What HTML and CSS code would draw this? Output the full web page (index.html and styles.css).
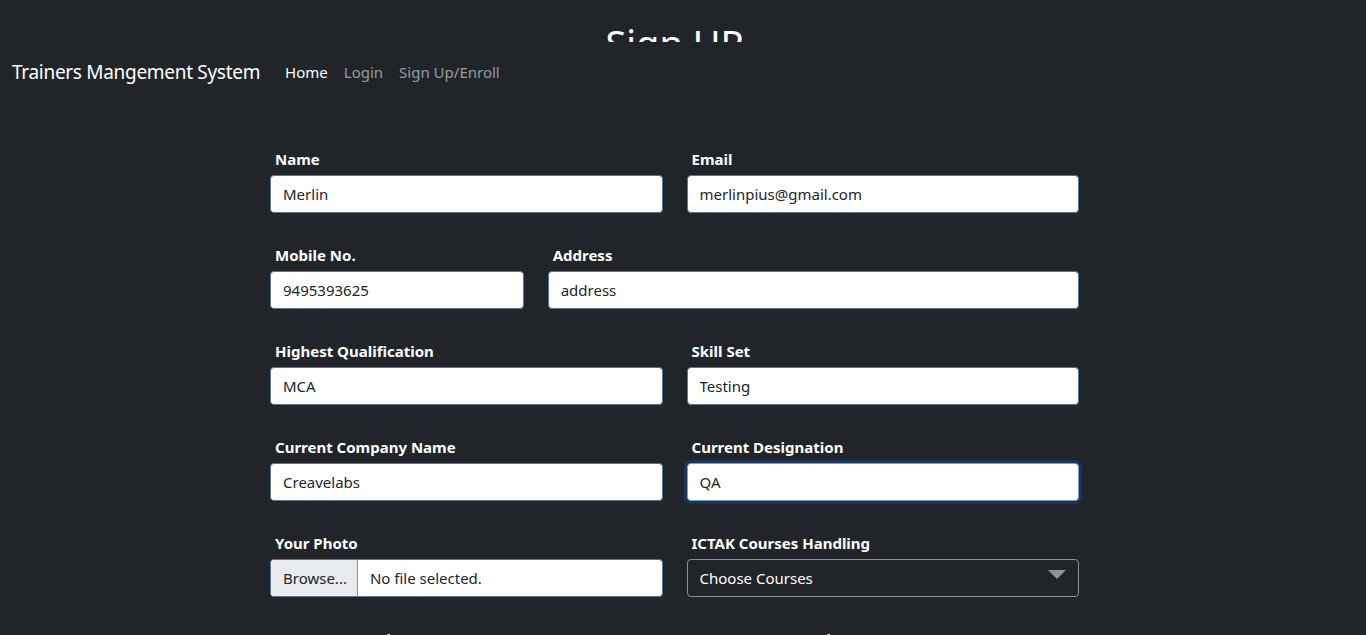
FILE: index.html
```html
<!DOCTYPE html>
<html lang="en">
<head>
<meta charset="utf-8">
<title>Sign UP</title>
<link rel="stylesheet" href="styles.css">
</head>
<body>
<div class="page">
  <h1 class="title">Sign UP</h1>
  <nav class="navbar">
    <a class="brand" href="#">Trainers Mangement System</a>
    <ul class="nav-links">
      <li><a class="nav-link active" href="#">Home</a></li>
      <li><a class="nav-link" href="#">Login</a></li>
      <li><a class="nav-link" href="#">Sign Up/Enroll</a></li>
    </ul>
  </nav>
  <form class="signup-form">
    <div class="field col-6">
      <label class="field-label">Name</label>
      <input class="control" type="text" value="Merlin">
    </div>
    <div class="field col-6">
      <label class="field-label">Email</label>
      <input class="control" type="text" value="merlinpius@gmail.com">
    </div>
    <div class="field col-4">
      <label class="field-label">Mobile No.</label>
      <input class="control" type="text" value="9495393625">
    </div>
    <div class="field col-8">
      <label class="field-label">Address</label>
      <input class="control" type="text" value="address">
    </div>
    <div class="field col-6">
      <label class="field-label">Highest Qualification</label>
      <input class="control" type="text" value="MCA">
    </div>
    <div class="field col-6">
      <label class="field-label">Skill Set</label>
      <input class="control" type="text" value="Testing">
    </div>
    <div class="field col-6">
      <label class="field-label">Current Company Name</label>
      <input class="control" type="text" value="Creavelabs">
    </div>
    <div class="field col-6">
      <label class="field-label">Current Designation</label>
      <input class="control is-focused" type="text" value="QA">
    </div>
    <div class="field col-6">
      <label class="field-label">Your Photo</label>
      <div class="file-control">
        <span class="file-button">Browse...</span>
        <span class="file-name">No file selected.</span>
      </div>
    </div>
    <div class="field col-6">
      <label class="field-label">ICTAK Courses Handling</label>
      <div class="select-control">
        <span>Choose Courses</span>
        <svg class="caret" width="18" height="10" viewBox="0 0 18 10"><path d="M0 0 L18 0 L9 9 Z" fill="#8f9296"/></svg>
      </div>
    </div>
    <div class="field col-6">
      <label class="field-label">Enter Password</label>
      <input class="control" type="password" value="">
    </div>
    <div class="field col-6">
      <label class="field-label">Re-Enter Password</label>
      <input class="control" type="password" value="">
    </div>
  </form>
</div>
</body>
</html>
```
FILE: styles.css
```css
* { box-sizing: border-box; }
html, body {
  margin: 0;
  padding: 0;
  background: #212529;
  height: 100%;
  overflow: hidden;
}
body {
  font-family: "Noto Sans", "Open Sans", sans-serif;
  color: #fff;
}
.page {
  position: relative;
  width: 1349px;
}
.title {
  margin: 0;
  padding-top: 20px;
  height: 42px;
  overflow: hidden;
  text-align: center;
  font-weight: 400;
  font-size: 38px;
  line-height: 46px;
  color: #fff;
}
.navbar {
  display: flex;
  align-items: center;
  height: 62px;
  padding: 0 12px 2px;
  background: #212529;
}
.brand {
  color: #fff;
  text-decoration: none;
  font-size: 19px;
  margin-right: 17px;
  letter-spacing: -0.3px;
}
.nav-links {
  display: flex;
  list-style: none;
  margin: 0;
  padding: 0;
}
.nav-link {
  display: block;
  padding: 0 8px;
  font-size: 15px;
  color: rgba(255,255,255,0.55);
  text-decoration: none;
}
.nav-link.active { color: #fff; }
.signup-form {
  display: grid;
  grid-template-columns: repeat(12, 1fr);
  column-gap: 24px;
  row-gap: 30px;
  width: 809px;
  margin: 43px 0 0 270px;
}
.col-4 { grid-column: span 4; }
.col-6 { grid-column: span 6; }
.col-8 { grid-column: span 8; }
.field { display: flex; flex-direction: column; }
.field-label {
  display: block;
  padding-left: 5px;
  font-weight: 700;
  font-size: 15px;
  line-height: 24px;
  margin-bottom: 4px;
}
.control {
  display: block;
  width: 100%;
  height: 38px;
  padding: 0 12px;
  font-family: inherit;
  font-size: 15px;
  color: #212529;
  background: #fff;
  border: 1px solid #5b7590;
  border-radius: 4px;
  outline: none;
}
.control.is-focused {
  border-color: #7c9cc4;
  box-shadow: 0 0 0 3px #1a355a;
}
.file-control {
  display: flex;
  height: 38px;
  background: #fff;
  border: 1px solid #5b7590;
  border-radius: 4px;
  overflow: hidden;
  font-size: 15px;
  color: #212529;
}
.file-button {
  display: flex;
  align-items: center;
  padding: 0 10px 0 12px;
  background: #e9ecef;
  border-right: 1px solid #8096ad;
}
.file-name {
  display: flex;
  align-items: center;
  padding-left: 12px;
}
.select-control {
  display: flex;
  align-items: center;
  justify-content: space-between;
  height: 38px;
  padding: 0 12px;
  border: 1px solid #8d9195;
  border-radius: 4px;
  font-size: 15px;
  color: #fff;
  background: #212529;
}
.caret { margin-top: -6px; }
```
